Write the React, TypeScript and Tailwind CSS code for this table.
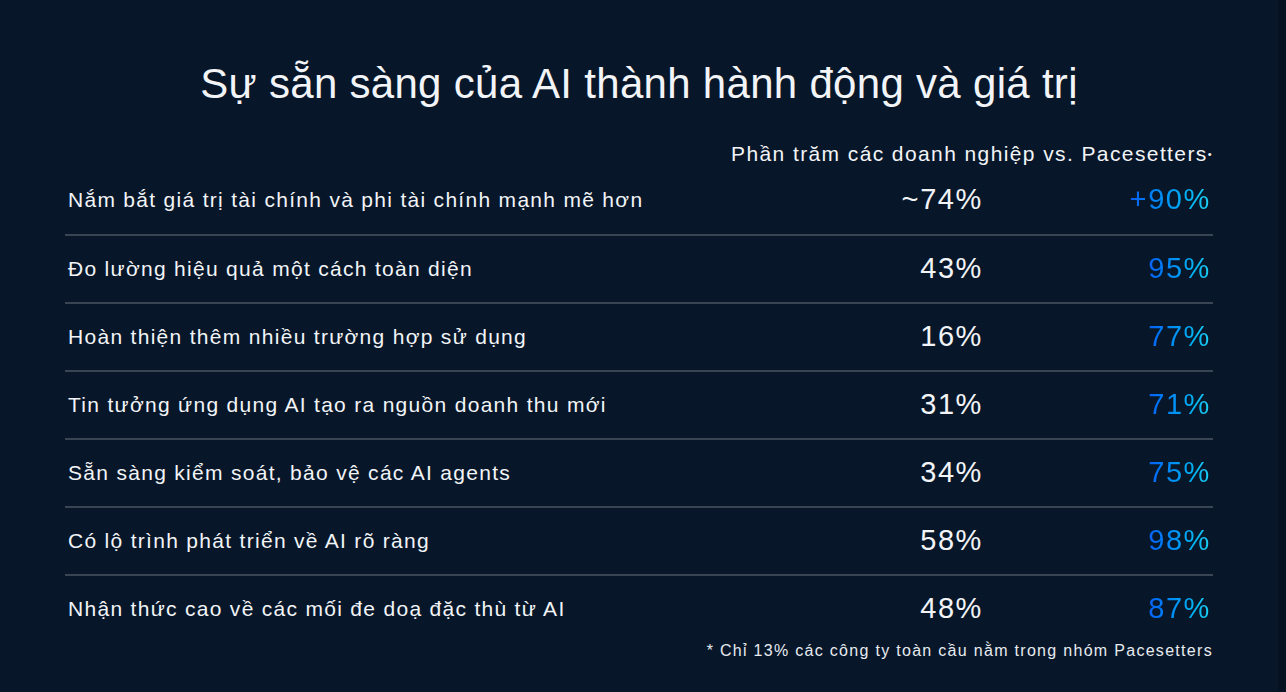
import React from 'react';

const rows = [
  { label: 'Nắm bắt giá trị tài chính và phi tài chính mạnh mẽ hơn', all: '~74%', pace: '+90%' },
  { label: 'Đo lường hiệu quả một cách toàn diện', all: '43%', pace: '95%' },
  { label: 'Hoàn thiện thêm nhiều trường hợp sử dụng', all: '16%', pace: '77%' },
  { label: 'Tin tưởng ứng dụng AI tạo ra nguồn doanh thu mới', all: '31%', pace: '71%' },
  { label: 'Sẵn sàng kiểm soát, bảo vệ các AI agents', all: '34%', pace: '75%' },
  { label: 'Có lộ trình phát triển về AI rõ ràng', all: '58%', pace: '98%' },
  { label: 'Nhận thức cao về các mối đe doạ đặc thù từ AI', all: '48%', pace: '87%' },
];

const App: React.FC = () => {
  return (
    <div className="w-full h-[692px] bg-[#071729] border-r-[8px] border-[#061221] text-[#f2f4f7] font-['Liberation_Sans',Arial,sans-serif] overflow-hidden">
      {/* TITLE */}
      <div className="h-[134px] pt-[58px] text-center">
        <h1 className="text-[42px] leading-[52px] tracking-[0.3px]">Sự sẵn sàng của AI thành hành động và giá trị</h1>
      </div>

      <div className="pl-[65px] pr-[65px]">
        <div className="h-[32px] flex items-end justify-end">
          <p className="text-[21px] leading-[24px] tracking-[1.4px]">
            Phần trăm các doanh nghiệp vs. Pacesetters<span className="text-[11px] align-top">•</span>
          </p>
        </div>

        {/* TABLE */}
        <div>
          {rows.map((row, idx) => (
            <div
              key={idx}
              className={`h-[68px] flex items-center ${idx > 0 ? 'border-t-2 border-[#3a4554]' : ''}`}
            >
              <div className="flex-1 pl-[3px] text-[21px] tracking-[1.3px]">{row.label}</div>
              <div className="w-[160px] text-right text-[29px] tracking-[1.6px]">{row.all}</div>
              <div className="w-[230px] pr-[2px] text-right text-[29px] tracking-[1.6px]">
                <span className="bg-linear-to-r from-[#0f5ef5] to-[#20d0f2] bg-clip-text text-transparent">
                  {row.pace}
                </span>
              </div>
            </div>
          ))}
        </div>

        <div className="text-right text-[16px] leading-[18px] tracking-[1.3px] text-[#e8ebf0]">
          * Chỉ 13% các công ty toàn cầu nằm trong nhóm Pacesetters
        </div>
      </div>
    </div>
  );
};

export default App;
